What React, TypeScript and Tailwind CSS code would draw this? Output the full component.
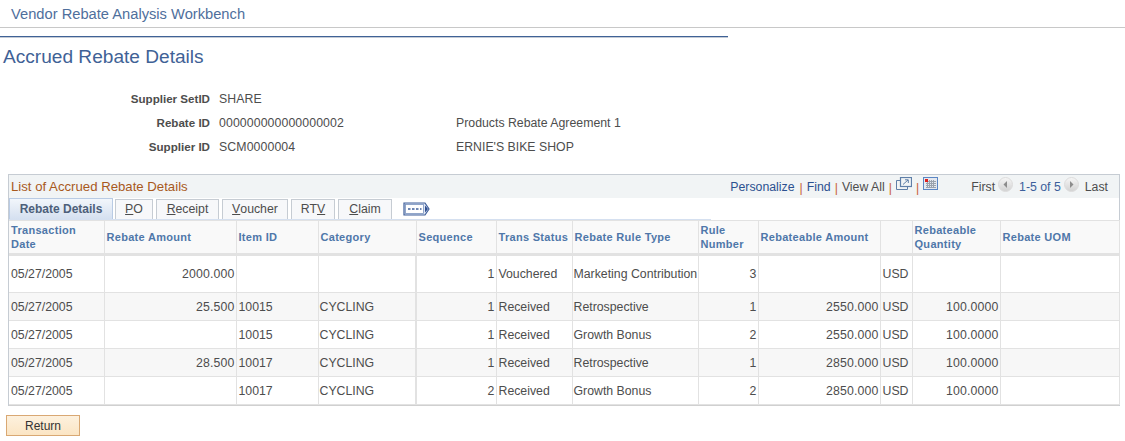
const columns = [
  { label: 'Transaction Date', width: 95 },
  { label: 'Rebate Amount', width: 132 },
  { label: 'Item ID', width: 82 },
  { label: 'Category', width: 98 },
  { label: 'Sequence', width: 80 },
  { label: 'Trans Status', width: 76 },
  { label: 'Rebate Rule Type', width: 126 },
  { label: 'Rule Number', width: 60 },
  { label: 'Rebateable Amount', width: 122 },
  { label: '', width: 32 },
  { label: 'Rebateable Quantity', width: 88 },
  { label: 'Rebate UOM', width: 119 },
];

const rows = [
  ['05/27/2005', '2000.000', '', '', '1', 'Vouchered', 'Marketing Contribution', '3', '', 'USD', '', ''],
  ['05/27/2005', '25.500', '10015', 'CYCLING', '1', 'Received', 'Retrospective', '1', '2550.000', 'USD', '100.0000', ''],
  ['05/27/2005', '', '10015', 'CYCLING', '1', 'Received', 'Growth Bonus', '2', '2550.000', 'USD', '100.0000', ''],
  ['05/27/2005', '28.500', '10017', 'CYCLING', '1', 'Received', 'Retrospective', '1', '2850.000', 'USD', '100.0000', ''],
  ['05/27/2005', '', '10017', 'CYCLING', '2', 'Received', 'Growth Bonus', '2', '2850.000', 'USD', '100.0000', ''],
];

const rightAligned = [1, 4, 7, 8, 10];

const tabs = [
  { before: '', key: 'P', after: 'O', width: 'w-[38px]' },
  { before: '', key: 'R', after: 'eceipt', width: 'w-[63px]' },
  { before: '', key: 'V', after: 'oucher', width: 'w-[66px]' },
  { before: 'RT', key: 'V', after: '', width: 'w-[44px]' },
  { before: '', key: 'C', after: 'laim', width: 'w-[54px]' },
];

function Sep() {
  return <span className="mx-[4px] mt-[2px] text-[#c9603a]">|</span>;
}

function ArrowButton({ left }: { left?: boolean }) {
  return (
    <svg width="15" height="15" viewBox="0 0 15 15" className="ml-[3px] mr-[6px] mb-[5px]">
      <defs>
        <linearGradient id="rb" x1="0" y1="0" x2="0" y2="1">
          <stop offset="0" stopColor="#f6f6f6" />
          <stop offset="1" stopColor="#d2d2d2" />
        </linearGradient>
      </defs>
      <circle cx="7.5" cy="7.5" r="7" fill="url(#rb)" stroke="#dcdcdc" />
      <path d={left ? 'M9 4V11L5.500 7.500Z' : 'M6 4V11L9.500 7.500Z'} fill="#8c8c8c" />
    </svg>
  );
}

export default function App() {
  return (
    <div className="w-[1125px] h-[441px] overflow-hidden bg-white text-[12.3px] text-[#4d4d4d] font-['Liberation_Sans',Arial,sans-serif]">
      <div className="h-[28px] border-b border-[#c8c8c8] pl-[11px] pt-[5px] text-[14.7px] leading-[18px] text-[#4f6f9c]">
        Vendor Rebate Analysis Workbench
      </div>
      <div className="mt-[8px] w-[728px] border-t border-[#3f6296] border-b-[1px] border-b-[#c4cbd6] h-[2px]" />
      <h1 className="ml-[3px] mt-[8px] text-[19.1px] leading-[22px] text-[#3f6296]">Accrued Rebate Details</h1>

      <div className="mt-[22px] flex flex-col gap-[6px]">
        {[
          ['Supplier SetID', 'SHARE', ''],
          ['Rebate ID', '000000000000000002', 'Products Rebate Agreement 1'],
          ['Supplier ID', 'SCM0000004', "ERNIE'S BIKE SHOP"],
        ].map(([label, value, desc]) => (
          <div key={label} className="flex h-[18px] leading-[18px]">
            <div className="w-[210px] text-right text-[11.6px] font-bold">{label}</div>
            <div className="ml-[9px] w-[237px] tracking-[0.1px]">{value}</div>
            <div>{desc}</div>
          </div>
        ))}
      </div>

      <div className="ml-[8px] mt-[18px] w-[1112px] border-t border-l border-[#c6ccd3] border-r">
        <div className="flex h-[23px] items-center bg-[#f1f4f5] pl-[2px] pr-[11px] leading-[22px]">
          <span className="text-[13.2px] text-[#a8591c]">List of Accrued Rebate Details</span>
          <div className="ml-auto flex items-center">
            <span className="mr-[1px] text-[#2c5190]">Personalize</span>
            <Sep />
            <span className="text-[#2c5190]">Find</span>
            <Sep />
            <span>View All</span>
            <Sep />
            <svg width="16" height="14" viewBox="0 0 16 14" className="mb-[5px]" fill="none" stroke="#5f7fa8">
              <rect x="4.500" y="0.500" width="11" height="9" strokeWidth="1.200" />
              <path d="M4.500 3.500H0.500V12.500H11.500V9.500" />
              <path d="M7 7.500L12 3M9 2.800H12.300V6" />
            </svg>
            <Sep />
            <svg width="15" height="13" viewBox="0 0 15 13" className="mb-[6px]">
              <rect x="0.500" y="0.500" width="14" height="12" fill="#e4e8ef" stroke="#5b86c4" />
              <path d="M3 4.500H13M3 6.500H13M3 8.500H13M3 10.500H13M4.500 3V11M6.500 3V11M8.500 3V11M10.500 3V11" stroke="#9aa2ad" />
              <rect x="2" y="2" width="3" height="3" fill="#e0201c" />
            </svg>
            <span className="ml-[33px]">First</span>
            <ArrowButton left />
            <span className="text-[#3c5f9b]">1-5 of 5</span>
            <ArrowButton />
            <span>Last</span>
          </div>
        </div>

        <div className="flex h-[21px] items-end">
          <div className="flex h-[21px] w-[104px] items-center justify-center border border-b-0 border-[#b9cbe4] bg-gradient-to-b from-[#f2f6fb] to-[#d5e0f0] text-[12px] font-bold text-[#4d5f7a]">
            Rebate Details
          </div>
          {tabs.map((tab, i) => (
            <div
              key={tab.after + tab.key}
              className={`${i === 0 ? 'ml-[2px]' : 'ml-[3px]'} flex h-[20px] items-center justify-center border border-b-0 border-[#c6ccd3] bg-[#f7f8fa] ${tab.width}`}
            >
              {tab.before}
              <span className="underline">{tab.key}</span>
              {tab.after}
            </div>
          ))}
          <svg width="27" height="14" viewBox="0 0 27 14" className="ml-[11px] mb-[3px]">
            <path d="M1 1H22L26 7L22 13H1Z" fill="#dfe6f4" stroke="#3f5f9a" strokeWidth="1.200" />
            <rect x="2.500" y="2.500" width="18" height="9" fill="#fff" stroke="#7a93bf" strokeWidth="0.800" />
            <path d="M5 7H18.500" stroke="#3f5f9a" strokeWidth="1.500" strokeDasharray="2.500 1.500" />
            <path d="M22 3.500V10.500L25 7Z" fill="#2f4f90" />
          </svg>
        </div>
        <div className="mr-[408px] h-[1px] bg-[#d5e0f0]" />

        <table className="w-[1110px] table-fixed border-collapse">
          <colgroup>
            {columns.map((col, i) => (
              <col key={i} style={{ width: col.width }} />
            ))}
          </colgroup>
          <thead>
            <tr className="h-[34px] bg-[#f9f9f9] border-t border-[#e2e2e2]">
              {columns.map((col, i) => (
                <th
                  key={i}
                  className={`border-r border-b-[3px] border-[#e2e2e2] pl-[2px] pr-[1px] pb-[1px] text-left align-middle text-[11px] leading-[14px] font-bold tracking-[0.3px] text-[#4f77a9] ${i === 0 ? 'pr-[20px]' : ''}`}
                >
                  {col.label}
                </th>
              ))}
            </tr>
          </thead>
          <tbody>
            {rows.map((row, r) => (
              <tr key={r} className={`${r === 0 ? 'h-[38px]' : 'h-[28px]'} ${r % 2 === 1 ? 'bg-[#f7f7f7]' : 'bg-white'}`}>
                {row.map((cell, c) => (
                  <td
                    key={c}
                    className={`whitespace-nowrap border-r border-b border-[#e2e2e2] pr-[1px] ${r > 0 ? 'pt-[2px]' : ''} ${c === 3 || c === 6 ? 'pl-[1px]' : 'pl-[2px]'} ${c === 3 ? 'border-r-2' : ''} ${
                      rightAligned.includes(c) ? 'text-right tracking-[0.15px]' : 'text-left'
                    }`}
                  >
                    {cell}
                  </td>
                ))}
              </tr>
            ))}
          </tbody>
        </table>
        <div className="h-[1px] bg-[#d0d0d0]" />
      </div>

      <button className="ml-[6px] mt-[9px] block h-[21px] w-[74px] border border-[#d9a873] bg-gradient-to-b from-[#fdf1de] to-[#fbe5c4] text-[12px] text-[#333]">
        Return
      </button>
    </div>
  );
}
